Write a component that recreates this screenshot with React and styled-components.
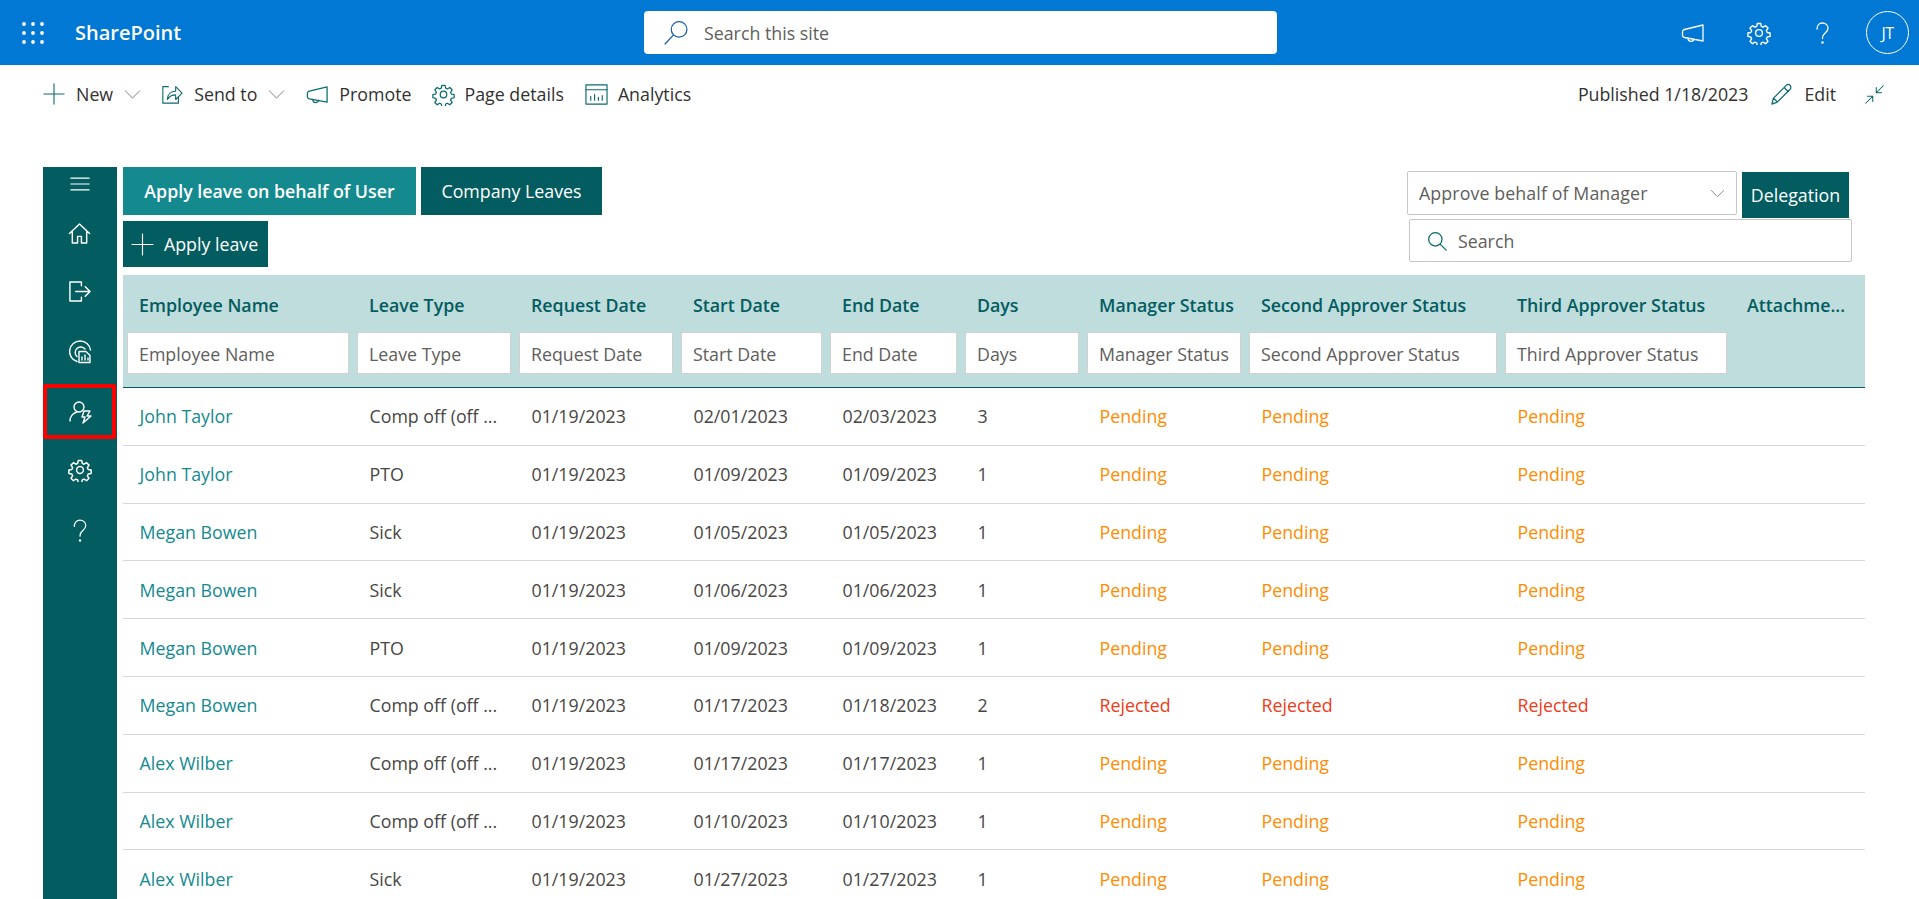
import React from "react";
import styled, { createGlobalStyle } from "styled-components";

const Global = createGlobalStyle`
  html, body { margin: 0; padding: 0; height: 100%; overflow: hidden; background: #fff; }
  body { font-family: "Open Sans", "Noto Sans", sans-serif; font-size: 17.8px; color: #323130; }
  * { box-sizing: border-box; }
`;

const Page = styled.div`height: 899px; overflow: hidden; display: flex; flex-direction: column;`;

const Suite = styled.header`
  height: 65px; background: #0078d4; display: flex; align-items: center; color: #fff; flex: none; position: relative;
`;
const Waffle = styled.svg`margin-left: 22px; width: 22px; height: 22px; flex: none;`;
const Brand = styled.div`margin-left: 31px; font-size: 20px; font-weight: 600; width: 569px;`;
const SearchBox = styled.div`
  width: 633px; height: 43px; background: #fff; border-radius: 4px; display: flex; align-items: center;
  padding-left: 20px; gap: 15px; color: #605e5c; font-size: 17.8px;
`;
const SuiteIcons = styled.div`margin-left: auto; display: flex; align-items: center; padding-right: 10px;`;
const SuiteIcon = styled.div`width: 24px; height: 24px; margin-right: ${p => p.$mr}px; display: flex;`;
const Avatar = styled.div`
  width: 43px; height: 43px; border: 1px solid #fff; border-radius: 50%; display: flex; align-items: center;
  justify-content: center; font-size: 16px; letter-spacing: -0.5px;
`;

const CommandBar = styled.div`
  height: 58px; flex: none; display: flex; align-items: center; padding: 0 34px 0 43px; font-size: 17.8px;
`;
const Cmd = styled.div`display: flex; align-items: center; gap: ${p => p.$gap ?? 11}px; margin-right: ${p => p.$mr ?? 21}px; color: #323130;`;
const CmdRight = styled.div`margin-left: auto; display: flex; align-items: center;`;
const Ico = styled.svg`flex: none; width: ${p => p.$s || 22}px; height: ${p => p.$s || 22}px;`;

const Body = styled.div`flex: 1; min-height: 0; display: flex; padding: 44px 54px 0 43px; gap: 6px;`;
const Side = styled.nav`width: 74px; flex: none; background: #035c5f; display: flex; flex-direction: column; padding-top: 4px;`;
const SideItem = styled.div`
  width: 73px; height: ${p => p.$h}px; margin-top: ${p => p.$mt || 0}px; flex: none; display: flex; align-items: center; justify-content: center;
  ${p => p.$active && "border: 4px solid #ff0000; border-radius: 2px;"}
`;

const Main = styled.main`flex: 1; min-width: 0; display: flex; flex-direction: column;`;
const Toolbar = styled.div`display: flex; justify-content: space-between; height: 108px; flex: none;`;
const LeftTools = styled.div`display: flex; flex-direction: column; gap: 6px;`;
const Tabs = styled.div`display: flex; gap: 5px;`;
const Tab = styled.div`
  height: 48px; width: ${p => p.$w}px; display: flex; align-items: center; justify-content: center; color: #fff;
  background: ${p => p.$active ? "#148a8f" : "#035c5f"}; font-weight: ${p => p.$active ? 600 : 400}; font-size: 17.8px;
`;
const ApplyBtn = styled.div`
  height: 46px; width: 145px; background: #035c5f; color: #fff; display: flex; align-items: center; gap: 10px; padding-left: 8px;
  font-size: 17.8px; white-space: nowrap;
`;
const RightTools = styled.div`display: flex; flex-direction: column; width: 445px; margin-right: 13px; padding-top: 4px;`;
const DropRow = styled.div`display: flex; gap: 5px; height: 48px;`;
const Drop = styled.div`
  width: 330px; height: 44px; border: 1px solid #c8c6c4; border-radius: 2px; display: flex; align-items: center; justify-content: space-between;
  padding: 0 11px; color: #605e5c; font-size: 17.8px; white-space: nowrap; letter-spacing: 0.1px;
`;
const Deleg = styled.div`
  width: 107px; height: 46px; margin-top: 1px; background: #035c5f; color: #fff; display: flex; align-items: center; justify-content: center;
  font-size: 17.8px;
`;
const TableSearch = styled.div`
  margin-left: 2px; width: 443px; height: 43px; border: 1px solid #c8c6c4; border-radius: 2px; display: flex; align-items: center; gap: 11px;
  padding-left: 17px; color: #605e5c; font-size: 17.8px;
`;

const cols = "230px 162px 162px 149px 135px 122px 162px 256px 230px 134px";
const HeadWrap = styled.div`
  height: 113px; flex: none; background: #bfdddc; border-bottom: 1px solid #035c5f; display: grid; grid-template-columns: ${cols}; grid-template-rows: 57px 42px;
`;
const HeadLabel = styled.div`
  display: flex; align-items: center; padding: 2px 0 0 16px; color: #035c5f; font-weight: 600; font-size: 17.8px; white-space: nowrap;
`;
const FilterCell = styled.div`padding: 0 4px;`;
const Filter = styled.div`
  height: 42px; background: #fff; border: 1px solid #d1d1d1; display: flex; align-items: center; padding: 2px 0 0 11px;
  color: #605e5c; font-size: 17.8px; white-space: nowrap; overflow: hidden;
`;
const Row = styled.div`
  height: 57.8px; flex: none; border-bottom: 1px solid #d8d8d8; display: grid; grid-template-columns: ${cols}; align-items: center;
  color: #484644; font-size: 17.8px;
`;
const Cell = styled.div`padding-left: 16.5px; white-space: nowrap; color: ${p => p.$c || "inherit"};`;

const Stroke = ({ children, c = "#fff", s, w = 1.3, vb = 24 }) => (
  <Ico $s={s} viewBox={`0 0 ${vb} ${vb}`} fill="none" stroke={c} strokeWidth={w} strokeLinecap="round" strokeLinejoin="round">{children}</Ico>
);
const GearP = () => <>
  <path d="M10.3 2.5h3.4l.6 2.9 1.7.8 2.6-1.5 2.4 2.4-1.6 2.6.8 1.8 2.9.5v3.4l-2.9.6-.8 1.8 1.6 2.5-2.4 2.4-2.6-1.6-1.7.8-.6 2.9h-3.4l-.6-2.9-1.8-.8-2.5 1.6-2.4-2.4 1.6-2.5-.8-1.8-2.9-.6v-3.4l2.9-.5.8-1.8-1.6-2.6 2.4-2.4 2.5 1.5 1.8-.8z" />
  <circle cx="12" cy="12" r="3.4"/>
</>;
const Gear = p => <Stroke {...p}><GearP/></Stroke>;
const Mega = p => <Stroke {...p}><path d="M22 4v16L3.500 16.500c-1.200-.3-2-1-2-2v-4c0-1 .8-1.700 2-2zM7 17c0 2.400 1.300 3.400 3 3.400 1.600 0 2.800-.8 3-2.400"/></Stroke>;
const Question = p => <Stroke {...p}><path d="M7 8c0-3.500 2.300-6 5.300-6C15.500 2 18 4.200 18 7.200c0 2.400-1.200 3.500-2.800 4.800-1.700 1.400-2.700 2.400-2.700 5v.5"/><circle cx="12.500" cy="21.500" r=".6" fill={p.c || "#fff"}/></Stroke>;
const Plus = p => <Stroke {...p} w={1.2}><path d="M12 1v22M1 12h22"/></Stroke>;
const Chev = ({ c = "#605e5c", s = 17 }) => <Stroke c={c} s={s} w={1.1}><path d="M2 7l10 10L22 7"/></Stroke>;
const Lens = ({ c, s = 22 }) => <Stroke c={c} s={s} w={1.5}><circle cx="10" cy="10" r="8"/><path d="M16 16l7 7"/></Stroke>;

const headers = ["Employee Name","Leave Type","Request Date","Start Date","End Date","Days","Manager Status","Second Approver Status","Third Approver Status","Attachme..."];
const rows = [
  ["John Taylor","Comp off (off ...","02/01/2023","02/03/2023","3","P"],
  ["John Taylor","PTO","01/09/2023","01/09/2023","1","P"],
  ["Megan Bowen","Sick","01/05/2023","01/05/2023","1","P"],
  ["Megan Bowen","Sick","01/06/2023","01/06/2023","1","P"],
  ["Megan Bowen","PTO","01/09/2023","01/09/2023","1","P"],
  ["Megan Bowen","Comp off (off ...","01/17/2023","01/18/2023","2","R"],
  ["Alex Wilber","Comp off (off ...","01/17/2023","01/17/2023","1","P"],
  ["Alex Wilber","Comp off (off ...","01/10/2023","01/10/2023","1","P"],
  ["Alex Wilber","Sick","01/27/2023","01/27/2023","1","P"],
];

const T = "#0b6a70";

export default function App() {
  return (
    <Page>
      <Global />
      <Suite>
        <Waffle viewBox="0 0 22 22" fill="#fff">
          {[2,11,20].flatMap(y => [2,11,20].map(x => <circle key={x+"-"+y} cx={x} cy={y} r="1.900" />))}
        </Waffle>
        <Brand>SharePoint</Brand>
        <SearchBox><Stroke c="#1b5fa8" s={25} w={1.2}><circle cx="14.500" cy="9" r="7.500"/><path d="M9 14.500L1 23"/></Stroke>Search this site</SearchBox>
        <SuiteIcons>
          <SuiteIcon $mr={42}><Mega s={24}/></SuiteIcon>
          <SuiteIcon $mr={39}><Gear s={24} w={1.4}/></SuiteIcon>
          <SuiteIcon $mr={32}><Question s={24}/></SuiteIcon>
          <Avatar>JT</Avatar>
        </SuiteIcons>
      </Suite>
      <CommandBar>
        <Cmd $mr={20}><Plus c={T} s={22}/>New <Chev/></Cmd>
        <Cmd $mr={21}><Stroke c={T} s={22} w={1.2}><path d="M8 4H2v18h17v-6"/><path d="M7 18c0-6 4-9 9-9V4l7 7-7 7v-5c-4 0-7 1.500-9 5z"/></Stroke>Send to <Chev/></Cmd>
        <Cmd $mr={20} $gap={10}><Mega c={T} s={23}/>Promote</Cmd>
        <Cmd $mr={21} $gap={10}><Gear c={T} s={23}/>Page details</Cmd>
        <Cmd $gap={10}><Stroke c={T} s={23} w={1.2}><rect x="1" y="2" width="22" height="20"/><path d="M1 7h22M6 18v-4M10 18v-6M14 18v-3M18 18v-5"/></Stroke>Analytics</Cmd>
        <CmdRight>
          <Cmd $mr={22}>Published 1/18/2023</Cmd>
          <Cmd $mr={28}><Stroke c={T} s={23} w={1.3}><path d="M2 22l1.500-6L17 2.500c1.500-1.500 3-1.500 4 0s1.200 2.500 0 4L7.500 20zM15 5l4 4M4 16l3.500 3.500"/></Stroke>Edit</Cmd>
          <Cmd $mr={0}><Stroke c={T} s={21} w={1.2}><path d="M22 2l-8 8M14 4v6h6M2 22l8-8M4 14h6v6"/></Stroke></Cmd>
        </CmdRight>
      </CommandBar>
      <Body>
        <Side>
          <SideItem $h={26}><Stroke s={20} w={1.4}><path d="M1 5h22M1 12h22M1 19h22"/></Stroke></SideItem>
          <SideItem $h={48} $mt={12}><Stroke s={23} w={1.5}><path d="M1.500 12L12 2l10.500 10M4.500 10v12h5.500v-7h4v7h5.500V10"/></Stroke></SideItem>
          <SideItem $h={58} $mt={5}><Stroke s={23} w={1.5}><path d="M14 6V2H2v20h12v-4M8 12h15M18 7l5 5-5 5"/></Stroke></SideItem>
          <SideItem $h={54} $mt={5}><Stroke s={24} w={1.4}><path d="M9 21.500A10.500 10.500 0 1 1 22.500 10M9 16.500A5.500 5.500 0 1 1 17 9"/><path d="M11 11.500h7l4 4v7H11z" /><path d="M14 20v-3M17 20v-5M20 20v-2"/></Stroke></SideItem>
          <SideItem $h={55} $mt={5} $active><Stroke s={24} w={1.4}><circle cx="11" cy="7" r="5"/><path d="M2 21c0-4.500 3-8 7-9"/><path d="M16 11h6l-3 5h4l-8 7 2-6h-3z"/></Stroke></SideItem>
          <SideItem $h={58} $mt={2}><Gear s={24} w={1.5}/></SideItem>
          <SideItem $h={58} $mt={2}><Question s={25} w={1.2}/></SideItem>
        </Side>
        <Main>
          <Toolbar>
            <LeftTools>
              <Tabs>
                <Tab $active $w={293}>Apply leave on behalf of User</Tab>
                <Tab $w={181}>Company Leaves</Tab>
              </Tabs>
              <ApplyBtn><Plus s={23}/>Apply leave</ApplyBtn>
            </LeftTools>
            <RightTools>
              <DropRow>
                <Drop>Approve behalf of Manager<Chev s={15}/></Drop>
                <Deleg>Delegation</Deleg>
              </DropRow>
              <TableSearch><Lens c={T} s={20}/>Search</TableSearch>
            </RightTools>
          </Toolbar>
          <HeadWrap>
            {headers.map(h => <HeadLabel key={h}>{h}</HeadLabel>)}
            {headers.map((h, i) => i < 9 ? <FilterCell key={h}><Filter>{h}</Filter></FilterCell> : <div key={h}/>)}
          </HeadWrap>
          {rows.map((r, i) => {
            const sc = r[5] === "P" ? "#ff8c00" : "#f03a17";
            const st = r[5] === "P" ? "Pending" : "Rejected";
            return (
              <Row key={i}>
                <Cell $c="#148a8f">{r[0]}</Cell>
                <Cell>{r[1]}</Cell>
                <Cell>01/19/2023</Cell>
                <Cell>{r[2]}</Cell>
                <Cell>{r[3]}</Cell>
                <Cell>{r[4]}</Cell>
                <Cell $c={sc}>{st}</Cell>
                <Cell $c={sc}>{st}</Cell>
                <Cell $c={sc}>{st}</Cell>
                <Cell/>
              </Row>
            );
          })}
        </Main>
      </Body>
    </Page>
  );
}
